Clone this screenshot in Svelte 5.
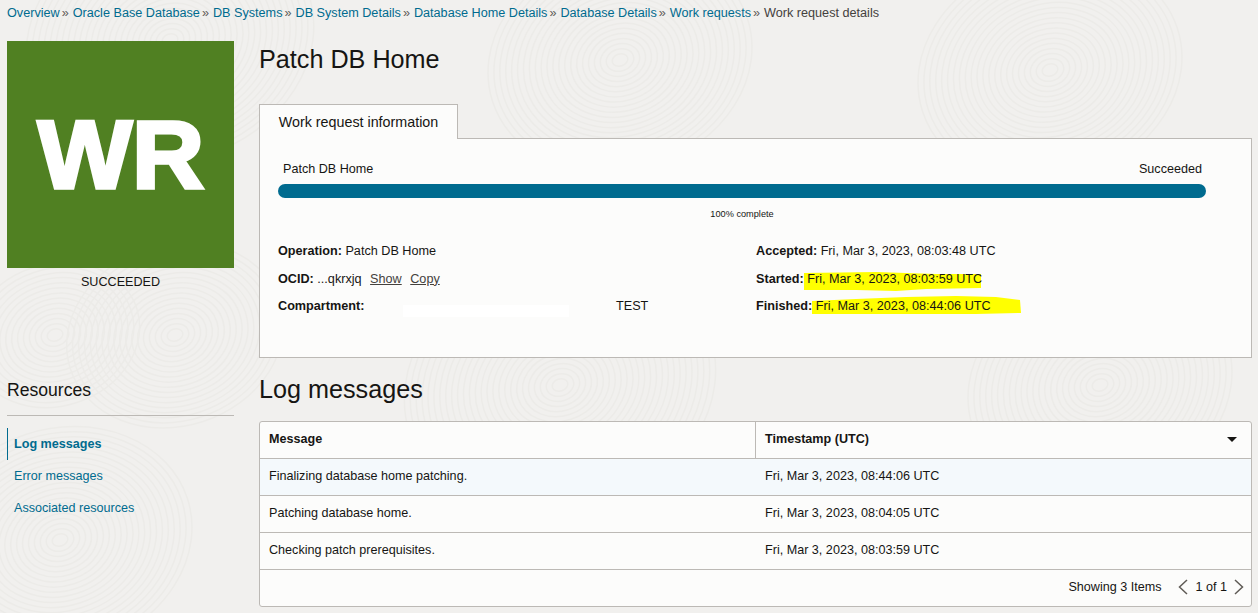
<script>
  const crumbs = [
    "Overview",
    "Oracle Base Database",
    "DB Systems",
    "DB System Details",
    "Database Home Details",
    "Database Details",
    "Work requests"
  ];

  const logs = [
    { message: "Finalizing database home patching.", time: "Fri, Mar 3, 2023, 08:44:06 UTC" },
    { message: "Patching database home.", time: "Fri, Mar 3, 2023, 08:04:05 UTC" },
    { message: "Checking patch prerequisites.", time: "Fri, Mar 3, 2023, 08:03:59 UTC" }
  ];

  const resources = ["Log messages", "Error messages", "Associated resources"];

  // faint contour lines of the page background
  const swirls = [
    { x: 170, y: 40, n: 24 },
    { x: 55, y: 335, n: 14 },
    { x: 175, y: 335, n: 18 },
    { x: 60, y: 540, n: 22 },
    { x: 620, y: 60, n: 22 },
    { x: 1050, y: 70, n: 22 },
    { x: 560, y: 385, n: 26 },
    { x: 1100, y: 385, n: 22 }
  ];
</script>

<main class="page">
  <svg class="texture" width="1258" height="613" aria-hidden="true">
    {#each swirls as s}
      {#each Array(s.n) as _, i}
        <ellipse cx={s.x} cy={s.y} rx={8 + i * 6} ry={6 + i * 5} transform="rotate(-18 {s.x} {s.y})" />
      {/each}
    {/each}
  </svg>

  <nav class="crumbs">
    {#each crumbs as c}
      <span class="crumb">{c}</span><span class="sep">»</span>
    {/each}
    <span class="current">Work request details</span>
  </nav>

  <div class="columns">
    <aside class="side">
      <div class="tile"><span>WR</span></div>
      <div class="state">SUCCEEDED</div>
      <h3>Resources</h3>
      <ul>
        {#each resources as r, i}
          <li class:active={i === 0}>{r}</li>
        {/each}
      </ul>
    </aside>

    <section class="content">
      <h1>Patch DB Home</h1>
      <div class="tab">Work request information</div>
      <div class="panel">
        <div class="labels"><span>Patch DB Home</span><span>Succeeded</span></div>
        <div class="bar"></div>
        <div class="pct">100% complete</div>
        <div class="info">
          <div class="col">
            <p><b>Operation:</b> Patch DB Home</p>
            <p><b>OCID:</b> ...qkrxjq <u>Show</u> <u>Copy</u></p>
            <p>
              <b>Compartment:</b>
              <span class="redact"></span>
              <span class="test">TEST</span>
            </p>
          </div>
          <div class="col">
            <p><b>Accepted:</b> Fri, Mar 3, 2023, 08:03:48 UTC</p>
            <p>
              <svg class="marker" width="280" height="26" viewBox="0 -4 280 26" aria-hidden="true"><path d="M48 2 120 1l60 2h45v14l-55 1-30 2-40-1H48z" /></svg>
              <b>Started:</b> Fri, Mar 3, 2023, 08:03:59 UTC
            </p>
            <p>
              <svg class="marker" width="280" height="26" viewBox="0 -4 280 26" aria-hidden="true"><path d="M56 3 100 1l50-2 50-1 40 1 24 3 1 13-45 1H56z" /></svg>
              <b>Finished:</b> Fri, Mar 3, 2023, 08:44:06 UTC
            </p>
          </div>
        </div>
      </div>

      <h2>Log messages</h2>
      <div class="table">
        <div class="row head">
          <div class="cell msg">Message</div>
          <div class="cell ts">Timestamp (UTC)<span class="caret"></span></div>
        </div>
        {#each logs as log, i}
          <div class="row" class:hover={i === 0}>
            <div class="cell msg">{log.message}</div>
            <div class="cell ts">{log.time}</div>
          </div>
        {/each}
        <div class="foot">
          <span>Showing 3 Items</span>
          <svg class="prev" width="12" height="16" viewBox="0 0 12 16"><path d="M10 1 2.500 8l7.500 7" /></svg>
          <span>1 of 1</span>
          <svg width="12" height="16" viewBox="0 0 12 16"><path d="M2 1l7.500 7L2 15" /></svg>
        </div>
      </div>
    </section>
  </div>
</main>

<style>
  :global(body) {
    margin: 0;
    background: #f1f0ee;
    font-family: "Liberation Sans", Arial, sans-serif;
    color: #161513;
  }

  .page {
    position: relative;
    width: 1258px;
    height: 613px;
    overflow: hidden;
    padding: 5px 6px 0 7px;
    box-sizing: border-box;
  }

  .texture {
    position: absolute;
    top: 0;
    left: 0;
    fill: none;
    stroke: #ecebe8;
    stroke-width: 1.5;
  }

  .crumbs {
    position: relative;
    display: flex;
    align-items: center;
    height: 16px;
    font-size: 12.65px;
    white-space: nowrap;
    color: #006b8f;
  }

  .sep {
    color: #5f5b56;
    margin: 0 4px 0 2px;
  }

  .current {
    color: #44413d;
  }

  .columns {
    position: relative;
    display: flex;
    gap: 25px;
    margin-top: 20px;
  }

  .side {
    width: 227px;
    flex: none;
  }

  .tile {
    height: 227px;
    background: #508022;
    color: #fff;
    font-size: 96px;
    font-weight: 700;
    line-height: 227px;
    text-align: center;
    -webkit-text-stroke: 3.5px #fff;
  }

  .tile span {
    display: inline-block;
    transform: scaleX(1.04);
  }

  .state {
    margin-top: 6px;
    font-size: 12.6px;
    line-height: 16px;
    text-align: center;
  }

  h3 {
    margin: 90px 0 0;
    padding-bottom: 14px;
    font-size: 17.6px;
    font-weight: 400;
    line-height: 21px;
    border-bottom: 1px solid #bcb9b5;
  }

  ul {
    list-style: none;
    margin: 12px 0 0;
    padding: 0;
  }

  li {
    height: 32px;
    line-height: 32px;
    padding-left: 7px;
    font-size: 12.6px;
    color: #006b8f;
  }

  li.active {
    font-weight: 700;
    border-left: 1px solid #006b8f;
    padding-left: 6px;
  }

  .content {
    flex: 1;
    min-width: 0;
  }

  h1 {
    margin: 3px 0 0;
    font-size: 25.2px;
    font-weight: 400;
    line-height: 30px;
  }

  .tab {
    width: 199px;
    height: 35px;
    margin-top: 30px;
    margin-bottom: -1px;
    position: relative;
    box-sizing: border-box;
    background: #fcfcfb;
    border: 1px solid #bcb9b5;
    border-bottom: 0;
    font-size: 14.3px;
    line-height: 34px;
    text-align: center;
  }

  .panel {
    height: 220px;
    box-sizing: border-box;
    background: #fcfcfb;
    border: 1px solid #bcb9b5;
    padding: 22px 45px 0 18px;
  }

  .labels {
    display: flex;
    justify-content: space-between;
    padding: 0 4px 0 5px;
    font-size: 12.6px;
    line-height: 16px;
  }

  .bar {
    height: 14px;
    margin-top: 7px;
    border-radius: 7px;
    background: #006b8f;
  }

  .pct {
    margin-top: 11px;
    font-size: 9.2px;
    line-height: 10px;
    text-align: center;
  }

  .info {
    display: grid;
    grid-template-columns: 478px 1fr;
    margin-top: 24px;
    font-size: 12.65px;
  }

  .col p {
    position: relative;
    z-index: 0;
    margin: 0;
    height: 27.5px;
    line-height: 16px;
    white-space: nowrap;
  }

  .redact {
    position: absolute;
    left: 125px;
    top: 7px;
    width: 166px;
    height: 12px;
    background: #fff;
  }

  .test {
    position: absolute;
    left: 338px;
    top: 0;
  }

  u {
    color: #44413d;
    margin-left: 5px;
  }

  .marker {
    position: absolute;
    left: 0;
    top: -4px;
    z-index: -1;
    fill: #ffff00;
  }

  h2 {
    margin: 16px 0 0;
    font-size: 25.2px;
    font-weight: 400;
    line-height: 30px;
  }

  .table {
    margin-top: 17px;
    height: 186px;
    box-sizing: border-box;
    background: #fcfcfb;
    border: 1px solid #bcb9b5;
    border-radius: 3px;
    font-size: 12.6px;
  }

  .row {
    display: flex;
    height: 37px;
    box-sizing: border-box;
    border-bottom: 1px solid #bcb9b5;
  }

  .row.head {
    font-weight: 700;
  }

  .row.hover {
    background: #f4f9fc;
  }

  .cell {
    display: flex;
    align-items: center;
    padding-bottom: 2px;
  }

  .msg {
    width: 495px;
    box-sizing: border-box;
    padding-left: 9px;
  }

  .ts {
    flex: 1;
    padding-left: 9px;
    padding-right: 14px;
    justify-content: space-between;
    border-left: 1px solid transparent;
  }

  .head .ts {
    border-left-color: #bcb9b5;
  }

  .caret {
    width: 0;
    height: 0;
    border-left: 5px solid transparent;
    border-right: 5px solid transparent;
    border-top: 5px solid #161513;
  }

  .foot {
    display: flex;
    align-items: center;
    justify-content: flex-end;
    height: 36px;
    box-sizing: border-box;
    padding: 0 6px 3px 0;
    gap: 6px;
  }

  .foot svg {
    fill: none;
    stroke: #5f5b56;
    stroke-width: 1.5;
  }

  .prev {
    margin-left: 10px;
  }
</style>
